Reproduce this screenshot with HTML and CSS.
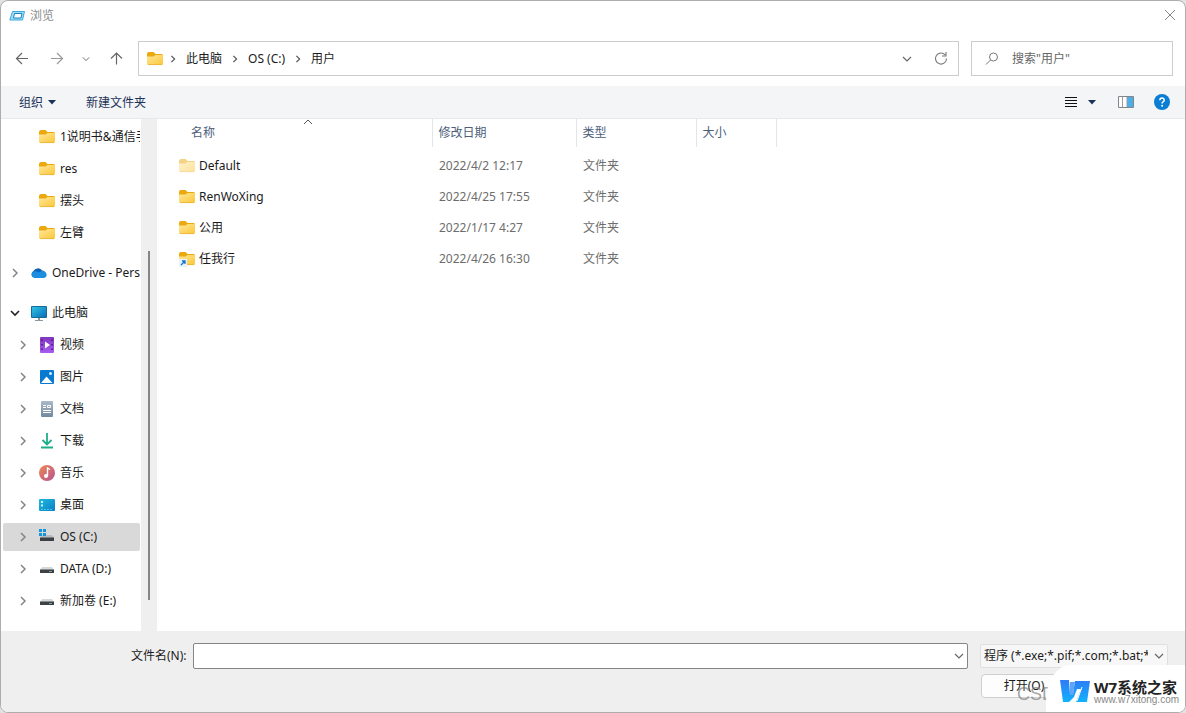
FILE: index.html
```html
<!DOCTYPE html>
<html lang="zh-CN">
<head>
<meta charset="utf-8">
<title>浏览</title>
<link rel="stylesheet" href="styles.css">
</head>
<body>
<svg class="defs" aria-hidden="true">
  <defs>
    <linearGradient id="gFolder" x1="0" y1="0" x2="1" y2="1"><stop offset="0" stop-color="#ffe79b"/><stop offset="1" stop-color="#fbc736"/></linearGradient>
    <linearGradient id="gCyan" x1="0" y1="0" x2="1" y2="1"><stop offset="0" stop-color="#2fc3e6"/><stop offset="1" stop-color="#0a6fb8"/></linearGradient>
    <linearGradient id="gDesk" x1="0" y1="0" x2="1" y2="1"><stop offset="0" stop-color="#1fb9de"/><stop offset="1" stop-color="#0b7fc6"/></linearGradient>
    <linearGradient id="gPurple" x1="0" y1="0" x2="0" y2="1"><stop offset="0" stop-color="#8036bd"/><stop offset="1" stop-color="#a65df0"/></linearGradient>
    <linearGradient id="gMusic" x1="0" y1="0" x2="1" y2="1"><stop offset="0" stop-color="#f0874f"/><stop offset="1" stop-color="#b65295"/></linearGradient>
    <linearGradient id="gDoc" x1="0" y1="0" x2="0" y2="1"><stop offset="0" stop-color="#a9bac9"/><stop offset="1" stop-color="#73899e"/></linearGradient>
    <linearGradient id="gBrand" x1="0" y1="0" x2="0" y2="1"><stop offset="0" stop-color="#2f7bf6"/><stop offset="1" stop-color="#10b2fd"/></linearGradient>
    <symbol id="folder" viewBox="0 0 16 16"><path d="M0 3q0-2 2-2h4.500l2 2H14.500q1.500 0 1.500 1.500v4H0z" fill="#eba90d"/><path d="M0 5.500h6.500l2-1.500h6.500q1 0 1 1v7.500q0 1.500-1.500 1.500h-13Q0 14 0 12.500z" fill="url(#gFolder)"/><path d="M1 13.600h14" stroke="#e8b137" stroke-width=".8"/></symbol>
    <symbol id="right" viewBox="0 0 10 10"><path d="M3 1l4 4-4 4" fill="none" stroke="currentColor" stroke-width="1.500"/></symbol>
    <symbol id="down" viewBox="0 0 10 10"><path d="M1 3l4 4 4-4" fill="none" stroke="currentColor" stroke-width="1.200"/></symbol>
    <symbol id="drive" viewBox="0 0 16 16"><path d="M3 6h10l2 3H1z" fill="#d5d8d9"/><path d="M1 8.500h14V12H1z" fill="#3b4144"/><path d="M10 10.500h3" stroke="#7d9b8f"/></symbol>
  </defs>
</svg>
<main class="dialog">
  <header class="titlebar">
    <svg class="icon" viewBox="0 0 16 16"><path d="M3.500 3.500h12l-2 8.500H.8z" fill="#a5def7" stroke="#3aa9df"/><path d="M5.500 5.500h7.500l-1 4.500H4.500z" fill="#fff" stroke="#1684c4"/></svg>
    <h1 class="title">浏览</h1>
    <button class="flat close" aria-label="关闭"><svg class="icon" viewBox="0 0 16 16"><path d="M3 2l10 10M13 2L3 12" fill="none" stroke="#888" stroke-width="1"/></svg></button>
  </header>

  <nav class="navbar" aria-label="导航">
    <div class="history">
      <button class="flat" aria-label="后退"><svg class="icon" viewBox="0 0 16 16"><path d="M14 7.500H2.500M8 2L2.500 7.500 8 13" fill="none" stroke="#666" stroke-width="1.200"/></svg></button>
      <button class="flat" aria-label="前进"><svg class="icon" viewBox="0 0 16 16"><path d="M3 7.500h11.500M9 2l5.500 5.500L9 13" fill="none" stroke="#999" stroke-width="1.200"/></svg></button>
      <button class="flat" aria-label="最近的位置"><svg class="mini"><use href="#down"/></svg></button>
      <button class="flat" aria-label="向上"><svg class="icon" viewBox="0 0 16 16"><path d="M8.500 13.500V2M3 7.500L8.500 2 14 7.500" fill="none" stroke="#666" stroke-width="1.200"/></svg></button>
    </div>
    <div class="address">
      <svg class="icon"><use href="#folder"/></svg>
      <svg class="sep"><use href="#right"/></svg>
      <a class="crumb" href="#pc">此电脑</a>
      <svg class="sep"><use href="#right"/></svg>
      <a class="crumb" href="#c">OS (C:)</a>
      <svg class="sep"><use href="#right"/></svg>
      <a class="crumb" href="#users">用户</a>
      <div class="address-tools">
        <button class="flat" aria-label="以前的位置"><svg class="mini wide"><use href="#down"/></svg></button>
        <button class="flat" aria-label="刷新"><svg class="icon" viewBox="0 0 16 16"><path d="M13.500 7.500A5.500 5.500 0 1 1 12.200 4M13 1v4H9" fill="none" stroke="#777" stroke-width="1.100"/></svg></button>
      </div>
    </div>
    <label class="search">
      <svg class="icon" viewBox="0 0 16 16"><circle cx="9.500" cy="6" r="4" fill="none" stroke="#777"/><path d="M6.500 9L2 13.500" stroke="#777"/></svg>
      <input type="text" placeholder='搜索"用户"' aria-label="搜索">
    </label>
  </nav>

  <div class="toolbar">
    <button class="flat tool">组织<svg class="caret" viewBox="0 0 8 5"><path d="M0 0h8L4 4.500z" fill="#1c3359"/></svg></button>
    <button class="flat tool">新建文件夹</button>
    <div class="view-tools">
      <button class="flat view" aria-label="更改视图"><svg class="icon" viewBox="0 0 16 16"><path d="M2 3.500h12M2 6.500h12M2 9.500h12M2 12.500h12" stroke="#111"/></svg><svg class="caret" viewBox="0 0 8 5"><path d="M0 0h8L4 4.500z" fill="#1c3359"/></svg></button>
      <button class="flat" aria-label="预览窗格"><svg class="icon" viewBox="0 0 16 16"><path d="M.5 2.500h15v11H.5z" fill="#fff" stroke="#81868b"/><path d="M9 3h6v10H9z" fill="#4baee8"/><path d="M4.500 3v10M9 3v10" stroke="#9b9b9b"/></svg></button>
      <button class="flat" aria-label="帮助"><svg class="icon" viewBox="0 0 16 16"><circle cx="8" cy="8" r="8" fill="#0a7dd4"/><path d="M5.800 6.200Q6 4 8 4t2.200 2q0 1.200-1.200 1.900-.9.600-.9 1.600" fill="none" stroke="#fff" stroke-width="1.500"/><circle cx="8.100" cy="11.700" r="1" fill="#fff"/></svg></button>
    </div>
  </div>

  <div class="content">
    <aside class="sidebar">
      <ul class="tree">
        <li><button class="node deep"><span class="twist"></span><svg class="icon"><use href="#folder"/></svg><span class="name">1说明书&amp;通信手册</span></button></li>
        <li><button class="node deep"><span class="twist"></span><svg class="icon"><use href="#folder"/></svg><span class="name">res</span></button></li>
        <li><button class="node deep"><span class="twist"></span><svg class="icon"><use href="#folder"/></svg><span class="name">摆头</span></button></li>
        <li><button class="node deep"><span class="twist"></span><svg class="icon"><use href="#folder"/></svg><span class="name">左臂</span></button></li>
      </ul>
      <ul class="tree">
        <li><button class="node"><svg class="twist"><use href="#right"/></svg><svg class="icon" viewBox="0 0 16 16"><path d="M3.500 12.500A3.500 3.500 0 0 1 2.500 6 5 5 0 0 1 11 5.500 4 4 0 0 1 14.500 9z" fill="#0b62b5"/><path d="M3.500 13a3.400 3.400 0 0 1-1-6.500q3-1 5 1l3-1.500q4-.5 5 3 .8 3.500-2.500 4z" fill="#1c8ee0"/></svg><span class="name">OneDrive - Personal</span></button></li>
      </ul>
      <ul class="tree">
        <li><button class="node open" aria-expanded="true"><svg class="twist" viewBox="0 0 10 10"><path d="M1 3l4 4 4-4" fill="none" stroke="currentColor" stroke-width="1.600"/></svg><svg class="icon" viewBox="0 0 16 16"><rect x="0" y="1" width="16" height="12" rx="1" fill="#176a93"/><path d="M1 2h14v10H1z" fill="url(#gCyan)"/><path d="M7 13h2v2h3v1H4v-1h3z" fill="#8c989e"/></svg><span class="name">此电脑</span></button></li>
        <li><button class="node deep"><svg class="twist"><use href="#right"/></svg><svg class="icon" viewBox="0 0 16 16"><rect x="1" y="0" width="14" height="16" rx="1" fill="url(#gPurple)"/><path d="M6 4.500l5 3.500-5 3.500z" fill="#fff"/><path d="M3 2.500v11M13 2.500v11" stroke="#4b147f" stroke-width="1.500" stroke-dasharray="1.500 3"/></svg><span class="name">视频</span></button></li>
        <li><button class="node deep"><svg class="twist"><use href="#right"/></svg><svg class="icon" viewBox="0 0 16 16"><rect x="1" y="1" width="14" height="14" rx="1" fill="#0879d0"/><path d="M2 14l5.500-6.500L13.500 14z" fill="#fff"/><circle cx="11.500" cy="4.500" r="1.500" fill="#d4efff"/></svg><span class="name">图片</span></button></li>
        <li><button class="node deep"><svg class="twist"><use href="#right"/></svg><svg class="icon" viewBox="0 0 16 16"><rect x="2" y="0" width="12" height="16" rx="1" fill="url(#gDoc)"/><path d="M4 4.500h3M4 6.500h3M4 9.500h8M4 11.500h8M8.500 4.500h3v2h-3z" fill="none" stroke="#fff"/></svg><span class="name">文档</span></button></li>
        <li><button class="node deep"><svg class="twist"><use href="#right"/></svg><svg class="icon" viewBox="0 0 16 16"><path d="M8 0v11M3.500 7L8 11.500 12.500 7M2 14.500h12" fill="none" stroke="#20ad8b" stroke-width="1.800"/></svg><span class="name">下载</span></button></li>
        <li><button class="node deep"><svg class="twist"><use href="#right"/></svg><svg class="icon" viewBox="0 0 16 16"><circle cx="8" cy="8" r="8" fill="url(#gMusic)"/><path d="M8.500 11V3l2.500 1.500" fill="none" stroke="#fff" stroke-width="1.400"/><circle cx="7" cy="11" r="2" fill="#fff"/></svg><span class="name">音乐</span></button></li>
        <li><button class="node deep"><svg class="twist"><use href="#right"/></svg><svg class="icon" viewBox="0 0 16 16"><rect x="0" y="2" width="16" height="12" rx="1" fill="url(#gDesk)"/><path d="M2 4h2v2H2zM2 7.500h2v2H2z" fill="#c9f5ff"/><path d="M2 12.500h12" stroke="#4cc8ee" stroke-dasharray="2 1"/></svg><span class="name">桌面</span></button></li>
        <li><button class="node deep selected" aria-current="true"><svg class="twist"><use href="#right"/></svg><svg class="icon" viewBox="0 0 16 16"><path d="M3 6h10l2 3H1z" fill="#b9bdbf"/><path d="M1 8.500h14V12H1z" fill="#3b4144"/><path d="M0 0h3v3H0zM4 0h3v3H4zM0 4h3v3H0zM4 4h3v3H4z" fill="#1295dc"/></svg><span class="name">OS (C:)</span></button></li>
        <li><button class="node deep"><svg class="twist"><use href="#right"/></svg><svg class="icon"><use href="#drive"/></svg><span class="name">DATA (D:)</span></button></li>
        <li><button class="node deep"><svg class="twist"><use href="#right"/></svg><svg class="icon"><use href="#drive"/></svg><span class="name">新加卷 (E:)</span></button></li>
      </ul>
    </aside>
    <div class="scroll"><div class="thumb"></div></div>
    <section class="files">
      <svg class="sort" viewBox="0 0 10 6"><path d="M1 5l4-4 4 4" fill="none" stroke="#555"/></svg>
      <table class="list">
        <colgroup><col class="c-name"><col class="c-date"><col class="c-type"><col class="c-size"><col></colgroup>
        <thead><tr><th scope="col">名称</th><th scope="col">修改日期</th><th scope="col">类型</th><th scope="col">大小</th><td></td></tr></thead>
        <tbody>
          <tr><td><span class="file"><svg class="icon faded"><use href="#folder"/></svg>Default</span></td><td>2022/4/2 12:17</td><td>文件夹</td><td></td><td></td></tr>
          <tr><td><span class="file"><svg class="icon"><use href="#folder"/></svg>RenWoXing</span></td><td>2022/4/25 17:55</td><td>文件夹</td><td></td><td></td></tr>
          <tr><td><span class="file"><svg class="icon"><use href="#folder"/></svg>公用</span></td><td>2022/1/17 4:27</td><td>文件夹</td><td></td><td></td></tr>
          <tr><td><span class="file"><svg class="icon" viewBox="0 0 16 16"><use href="#folder" width="16" height="16"/><path d="M0 8h8v8H0z" fill="#e6f3ff"/><path d="M2 14l4-4M3 10h3v3" fill="none" stroke="#1473cb" stroke-width="1.300"/></svg>任我行</span></td><td>2022/4/26 16:30</td><td>文件夹</td><td></td><td></td></tr>
        </tbody>
      </table>
    </section>
  </div>

  <footer class="footer">
    <div class="fields">
      <label class="field-label" for="fname">文件名(N):</label>
      <div class="combo">
        <input id="fname" type="text">
        <svg class="mini wide"><use href="#down"/></svg>
      </div>
      <div class="filter">
        <select aria-label="文件类型"><option>程序 (*.exe;*.pif;*.com;*.bat;*.cmd)</option></select>
        <svg class="mini wide"><use href="#down"/></svg>
      </div>
    </div>
    <div class="actions"><button class="open-btn">打开(O)</button></div>
  </footer>
  <span class="stamp">CSDN</span>
  <div class="brand">
    <svg class="brand-logo" viewBox="0 0 32 24"><path d="M1 1h9l1 14h3l2-13h15l-3 21H17l5-13h-4l-3 8-5 5H4z" fill="url(#gBrand)"/><path d="M11 3h5l-2 13h-3z" fill="#5fa4fa"/><path d="M23 8l-5 14" stroke="#fff"/></svg>
    <div class="brand-text"><strong>W7系统之家</strong><span>www.w7xitong.com</span></div>
  </div>
</main>
</body>
</html>
```

FILE: styles.css
```css
* { box-sizing: border-box; }
body {
  margin: 0;
  background: #dfe3e5;
  font: 12px/16px "Noto Sans", "Noto Sans CJK SC", sans-serif;
  color: #1b1b1b;
}
button, input, select { font: inherit; color: inherit; }
svg { display: block; flex: none; }
.defs { position: absolute; width: 0; height: 0; }
.dialog {
  position: relative;
  display: flex;
  flex-direction: column;
  min-height: 100vh;
  border: 1px solid #adadad;
  border-radius: 8px;
  background: #fff;
  overflow: hidden;
}
.icon { width: 16px; height: 16px; }
.mini { width: 8px; height: 8px; color: #666; }
.mini.wide { width: 10px; height: 10px; }
.flat {
  display: flex;
  align-items: center;
  padding: 0;
  border: 0;
  background: none;
}

.titlebar { display: flex; align-items: center; gap: 5px; height: 30px; padding: 0 7px 0 8px; }
.title { margin: 0; font-size: 12px; font-weight: 400; color: #8b8b8b; }
.close { margin-left: auto; }

.navbar { display: flex; align-items: center; height: 55px; padding: 0 12px 0 13px; }
.history { display: flex; align-items: center; justify-content: space-between; width: 110px; margin-right: 14px; }
.address {
  display: flex;
  flex: 1;
  align-items: center;
  height: 35px;
  padding: 0 9px 0 8px;
  border: 1px solid #ccc;
}
.sep { width: 8px; height: 8px; margin: 0 9px; color: #555; }
.icon + .sep { margin-left: 6px; }
.crumb { color: inherit; text-decoration: none; white-space: nowrap; }
.address-tools { display: flex; gap: 21px; margin-left: auto; }
.search {
  display: flex;
  align-items: center;
  gap: 12px;
  width: 202px;
  height: 35px;
  margin-left: 12px;
  padding: 0 12px;
  border: 1px solid #ccc;
}
.search input { width: 100%; padding: 0; border: 0; outline: 0; background: none; }
.search input::placeholder { color: #666; opacity: 1; }

.toolbar {
  display: flex;
  align-items: center;
  gap: 30px;
  height: 33px;
  padding: 0 15px 0 18px;
  border-bottom: 1px solid #e6e8ea;
  background: #f4f5f7;
  color: #1c3359;
}
.tool { gap: 5px; padding-top: 1px; }
.caret { width: 8px; height: 5px; }
.view-tools { display: flex; align-items: center; gap: 20px; margin-left: auto; }
.view { gap: 9px; padding-right: 2px; }

.content { display: flex; flex: 1; }
.sidebar { width: 140px; padding: 4px 1px 16px 2px; overflow: hidden; }
.tree { display: flex; flex-direction: column; gap: 4px; margin: 0; padding: 0; list-style: none; }
.tree + .tree { margin-top: 12px; }
.node {
  display: flex;
  align-items: center;
  width: 100%;
  height: 28px;
  padding: 0 0 0 7px;
  border: 0;
  border-radius: 2px;
  background: none;
  text-align: left;
}
.node.deep { padding-left: 15px; }
.node.selected { background: #d9d9d9; }
.twist { flex: none; width: 10px; height: 10px; margin-right: 11px; color: #858585; }
.open .twist { color: #222; }
.node .name { flex: 1; min-width: 0; margin-left: 5px; overflow: hidden; white-space: nowrap; }
.scroll { display: flex; justify-content: center; width: 16px; background: #efefef; }
.thumb { width: 2px; height: 349px; margin-top: 132px; background: #858585; }

.files { position: relative; flex: 1; min-width: 0; }
.sort { position: absolute; top: 0; left: 146px; width: 10px; height: 6px; }
.list { width: 100%; table-layout: fixed; border-collapse: collapse; }
.c-name { width: 275px; }
.c-date { width: 144px; }
.c-type { width: 120px; }
.c-size { width: 80px; }
.list thead tr { height: 28px; }
.list th { padding: 0 6px; font-weight: 400; text-align: left; color: #4c607a; border-right: 1px solid #e2e6e9; }
.list th:first-child { padding-left: 34px; }
.list thead + tbody::before { content: ""; display: table-row; height: 3px; }
.list tbody tr { height: 31px; }
.list tbody td { padding: 0 7px; color: #6d6d6d; white-space: nowrap; }
.list tbody td:first-child { padding-left: 22px; color: #1b1b1b; }
.file { display: flex; align-items: center; gap: 4px; }
.faded { opacity: .5; }

.footer { display: flex; flex-direction: column; gap: 5px; height: 81px; padding: 12px 17px 0 130px; background: #efefef; }
.fields { display: flex; align-items: center; }
.field-label { width: 62px; white-space: nowrap; }
.combo {
  display: flex;
  flex: 1;
  align-items: center;
  height: 26px;
  padding-right: 3px;
  border: 1px solid #858585;
  border-radius: 2px;
  background: #fff;
}
.combo input { flex: 1; min-width: 0; border: 0; outline: 0; background: none; }
.filter {
  display: flex;
  align-items: center;
  width: 188px;
  height: 24px;
  margin-left: 12px;
  padding: 0 3px;
  border: 1px solid #e0e0e0;
  border-radius: 2px;
  background: #f7f7f7;
}
.filter select {
  flex: 1;
  min-width: 0;
  margin-right: 6px;
  padding: 0;
  border: 0;
  background: none;
  appearance: none;
  text-overflow: clip;
}
.actions { display: flex; justify-content: flex-end; }
.open-btn {
  width: 86px;
  height: 24px;
  margin-right: 101px;
  padding: 0;
  border: 1px solid #cfcfcf;
  border-radius: 4px;
  background: #fdfdfd;
}
.stamp {
  position: absolute;
  right: 117px;
  bottom: 8px;
  font: 18px/20px "Liberation Sans", sans-serif;
  color: rgba(125, 125, 125, .7);
}
.brand {
  position: absolute;
  right: 0;
  bottom: 0;
  display: flex;
  align-items: center;
  gap: 3px;
  width: 139px;
  height: 47px;
  padding: 5px 0 0 13px;
  border-top-left-radius: 24px 36px;
  background: #fff;
}
.brand-logo { width: 32px; height: 24px; }
.brand-text { display: flex; flex-direction: column; padding-top: 2px; }
.brand-text strong { font: 700 15px/15px "Noto Sans", "Noto Sans CJK SC", sans-serif; color: #222; white-space: nowrap; }
.brand-text span { font: 10px/10px "Liberation Sans", sans-serif; color: #888; }
```
